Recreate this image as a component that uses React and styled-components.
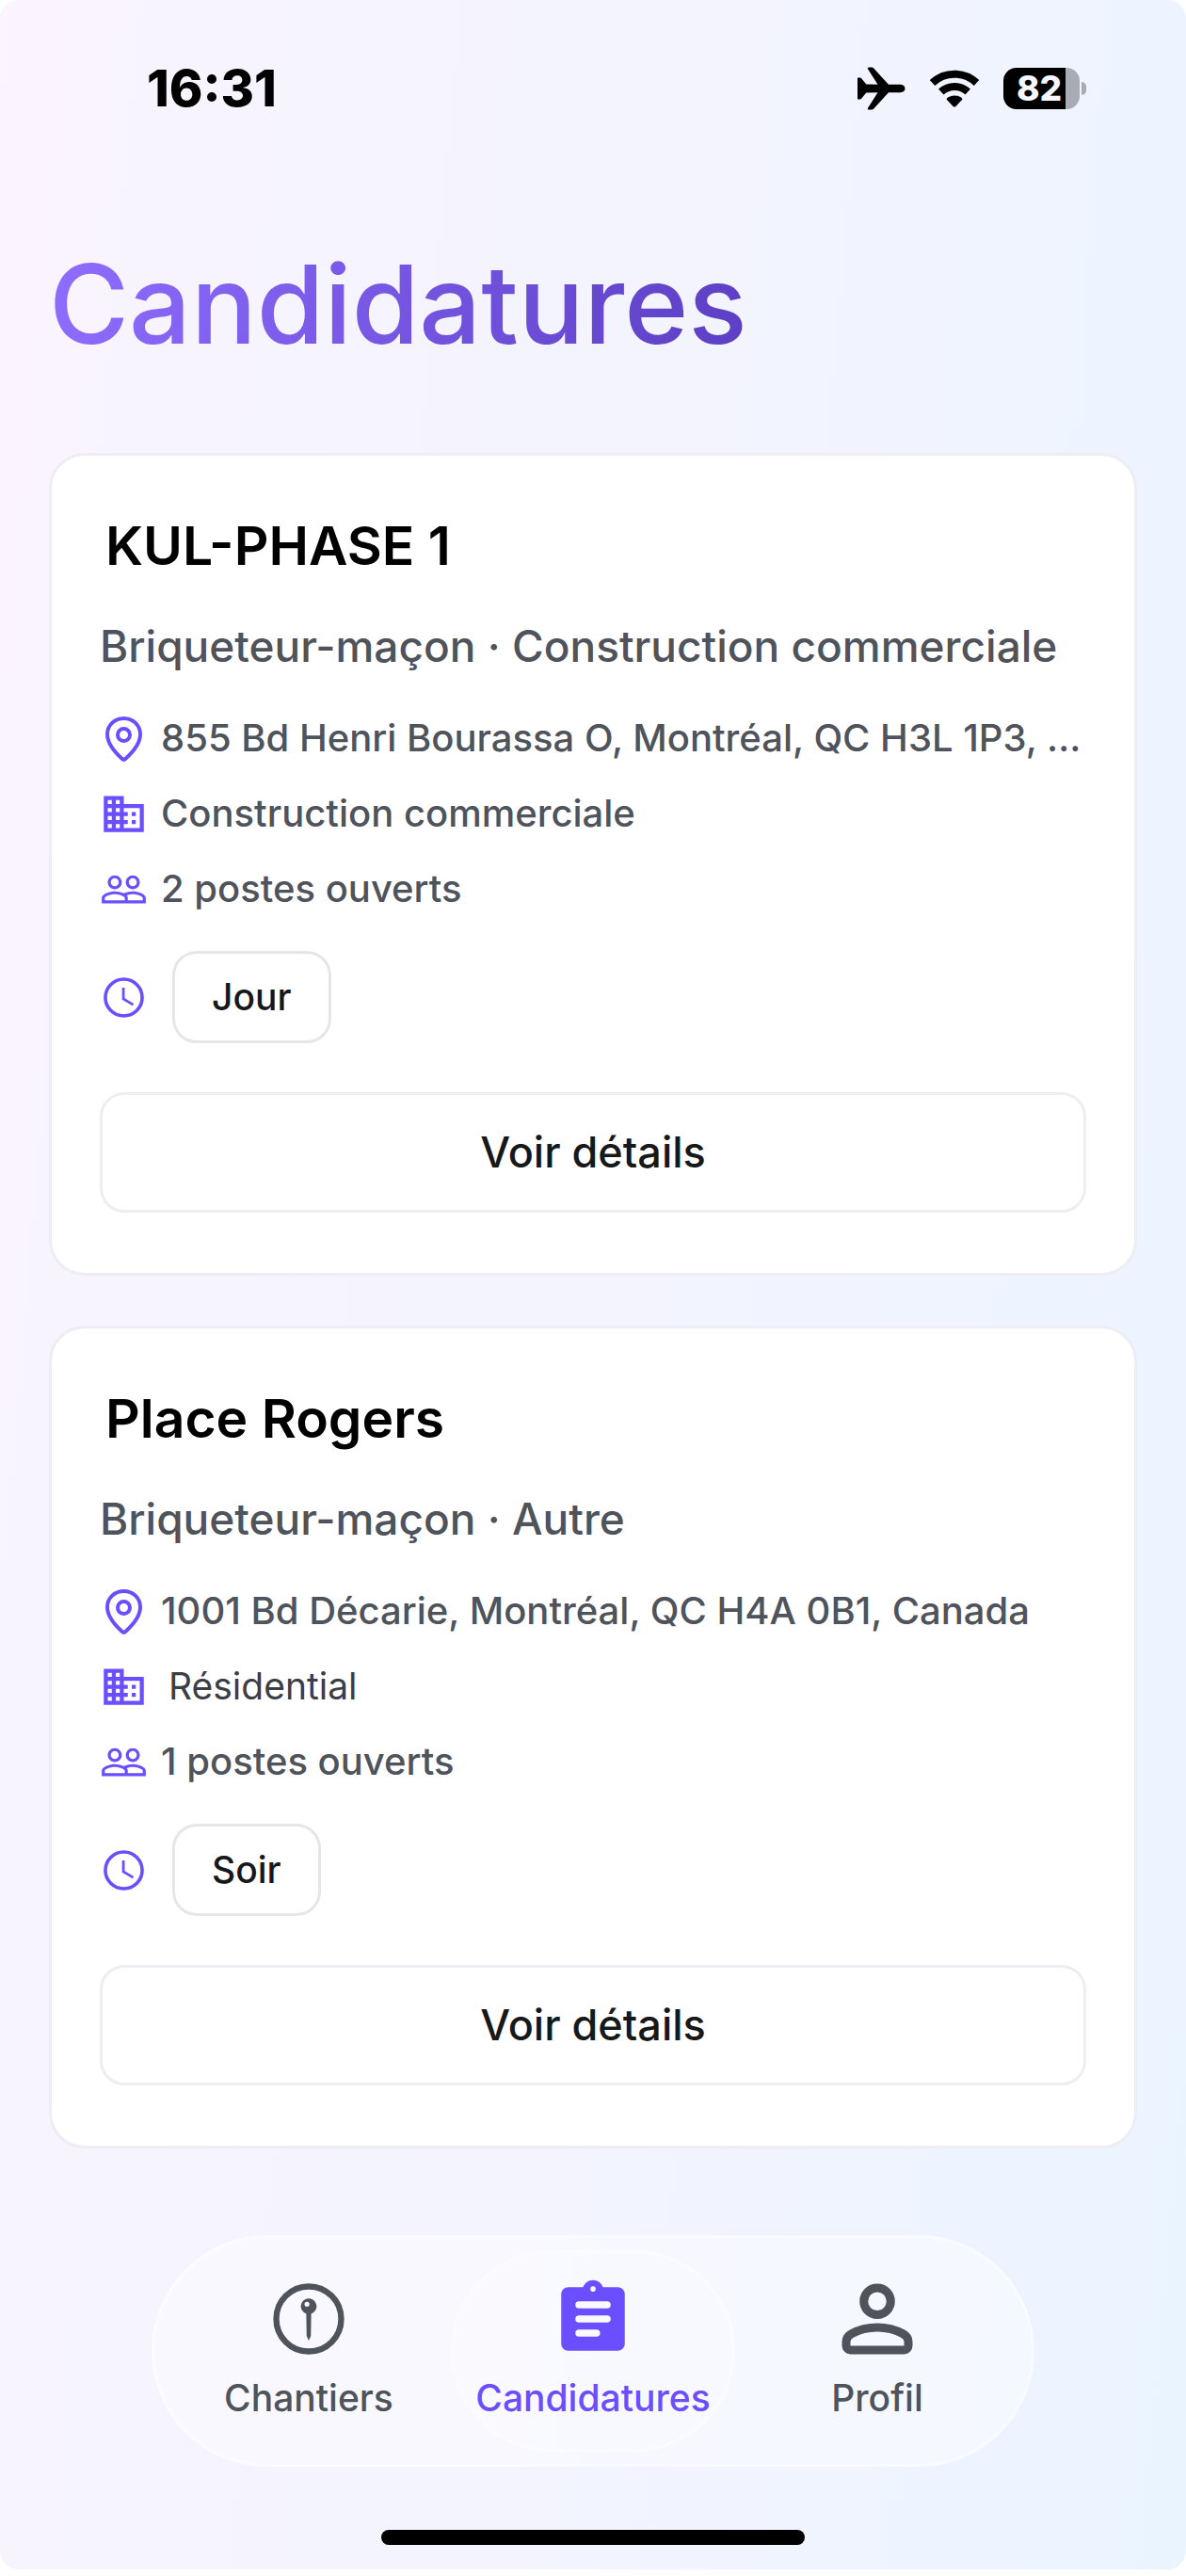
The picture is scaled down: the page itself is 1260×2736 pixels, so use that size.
import React from 'react';
import styled, { createGlobalStyle, css } from 'styled-components';

const Colors = {
  PRIMARY: '#6b4eff',
  TEXT: '#17181a',
  MUTED: '#4f535c',
  DARK: '#3b3e46',
  CARD_BORDER: '#ededf3',
  CHIP_BORDER: '#e6e6e9',
};

const GlobalStyle = createGlobalStyle`
  * {
    box-sizing: border-box;
  }
  body {
    margin: 0;
    background: #ffffff;
    font-family: Inter, Roboto, 'Liberation Sans', sans-serif;
    color: #000000;
  }
`;

const Screen = styled.div`
  min-height: calc(100vh - 7px);
  display: flex;
  flex-direction: column;
  border-radius: 20px;
  background: linear-gradient(95deg, #fcf4ff 0%, #f7f4fe 14%, #f4f4fe 45%, #f0f4ff 72%, #eaf4ff 100%);
`;

const StatusBar = styled.header`
  display: flex;
  align-items: center;
  justify-content: space-between;
  padding: 62px 106px 0 156px;
`;

const Clock = styled.time`
  font-size: 54px;
  font-weight: 800;
  line-height: 64px;
`;

const StatusIcons = styled.div`
  display: flex;
  align-items: center;
  gap: 25px;

  svg {
    display: block;
  }
`;

const Battery = styled.div`
  display: flex;
  align-items: center;
  gap: 2px;
`;

const BatteryBody = styled.div`
  width: 81px;
  height: 44px;
  border-radius: 14px;
  padding-left: 14px;
  background: linear-gradient(90deg, #000000 82%, #a9abb4 82%);
  color: #f5f6ff;
  font-size: 37px;
  font-weight: 800;
  line-height: 44px;
`;

const BatteryTip = styled.span`
  width: 5px;
  height: 14px;
  border-radius: 0 7px 7px 0;
  background: #a9abb4;
`;

const Main = styled.main`
  flex: 1;
  padding: 124px 52px 0;
`;

const PageTitle = styled.h1`
  width: fit-content;
  margin: 0 0 84px;
  font-size: 116px;
  font-weight: 500;
  line-height: 147px;
  color: transparent;
  background: linear-gradient(100deg, #8f6dff 0%, #5c3fc4 100%);
  background-clip: text;
`;

const CardList = styled.div`
  display: flex;
  flex-direction: column;
  gap: 53px;
`;

const Card = styled.article`
  border: 3px solid ${Colors.CARD_BORDER};
  border-radius: 38px;
  padding: 62px 51px 64px;
  background: #ffffff;
`;

const CardTitle = styled.h2`
  margin: 0 0 44px;
  padding-left: 6px;
  font-size: 57px;
  font-weight: 600;
  line-height: 68px;
`;

const Trade = styled.p`
  margin: 0 0 44px;
  color: ${Colors.MUTED};
  font-size: 46px;
  font-weight: 500;
  line-height: 56px;
`;

const Details = styled.ul`
  display: flex;
  flex-direction: column;
  gap: 28px;
  margin: 0 0 40px;
  padding: 0;
  list-style: none;
`;

const Detail = styled.li`
  display: flex;
  align-items: center;
  gap: 14px;
  height: 52px;
  color: ${Colors.MUTED};
  font-size: 40px;
  font-weight: 500;
  line-height: 52px;
`;

const DetailText = styled.span`
  min-width: 0;
  overflow: hidden;
  text-overflow: ellipsis;
  white-space: nowrap;
  ${(props) => (props.$plain && css`
    padding-left: 8px;
    color: ${Colors.DARK};
    font-size: 39px;
    font-weight: 400;
  `)}
`;

const DetailIcon = styled.svg`
  flex: none;
  width: 51px;
  height: 51px;
  color: ${Colors.PRIMARY};
`;

const Shift = styled.div`
  display: flex;
  align-items: center;
  gap: 26px;
  margin-bottom: 52px;
`;

const Chip = styled.span`
  border: 3px solid ${Colors.CHIP_BORDER};
  border-radius: 26px;
  padding: 20px 39px;
  color: ${Colors.TEXT};
  font-size: 39px;
  font-weight: 500;
  line-height: 52px;
`;

const DetailsButton = styled.button`
  display: block;
  width: 100%;
  border: 3px solid ${Colors.CARD_BORDER};
  border-radius: 26px;
  padding: 33px;
  background: #ffffff;
  color: ${Colors.TEXT};
  font-family: inherit;
  font-size: 45px;
  font-weight: 500;
  line-height: 56px;
`;

const TabBar = styled.nav`
  display: flex;
  align-self: center;
  width: 75%;
  max-width: 938px;
  margin-top: 90px;
  border: 3px solid rgba(255, 255, 255, 0.35);
  border-radius: 123px;
  padding: 13px;
  background: rgba(255, 255, 255, 0.4);
`;

const Tab = styled.a`
  flex: 1 1 0;
  display: flex;
  flex-direction: column;
  align-items: center;
  gap: 16px;
  border: 3px solid transparent;
  border-radius: 107px;
  padding: 25px 0 31px;
  color: ${Colors.MUTED};
  font-size: 39px;
  font-weight: 500;
  line-height: 46px;
  text-decoration: none;
  ${(props) => (props.$active && css`
    border-color: rgba(255, 255, 255, 0.35);
    background: rgba(255, 255, 255, 0.15);
    color: ${Colors.PRIMARY};
  `)}

  svg {
    width: 90px;
    height: 90px;
  }
`;

const HomeIndicator = styled.div`
  align-self: center;
  width: 36%;
  max-width: 450px;
  height: 16px;
  margin: 67px 0 26px;
  border-radius: 8px;
  background: #000000;
`;

const PlaneIcon = () => (
  <svg width="52" height="46" viewBox="0 0 52 46" aria-hidden="true">
    <path d="M2 11.5h1.4c.8 0 1.4.3 1.9.9l5 6.1 12.2.3L12 2.3C11.500 1.300 12 .5 13 .5h3c.9 0 1.600.3 2.200 1l15.800 17.300h12.500c3 0 5 1.900 5 4.200s-2 4.200-5 4.200H34L18.200 44.500c-.6.700-1.300 1-2.200 1h-3c-1 0-1.500-.8-1-1.800l10.500-16.500-12.200.3-5 6.100c-.5.600-1.100.9-1.900.9H2c-.7 0-1-.4-1-1V12.500c0-.6.300-1 1-1z" />
  </svg>
);

const WifiIcon = () => (
  <svg width="54" height="42" viewBox="0 0 54 42" aria-hidden="true">
    <g fill="none" stroke="#000000" strokeWidth="8">
      <path d="M3.500 15C16.500 2.500 37.500 2.500 50.500 15" />
      <path d="M12.800 24.500c8-7.500 20.400-7.500 28.400 0" />
    </g>
    <path d="M27 40.500c-.6 0-1-.2-1.400-.6l-6.400-6.600c-.7-.7-.6-1.600.1-2.200 4.400-3.600 11-3.600 15.400 0 .7.6.8 1.500.1 2.200l-6.400 6.600c-.4.400-.8.600-1.400.6z" />
  </svg>
);

const PlaceIcon = () => (
  <DetailIcon viewBox="0 0 51 51" fill="none" stroke="currentColor" strokeWidth="4" aria-hidden="true">
    <path d="M25.500 4C15.500 4 8 11.500 8 21c0 10 7.500 18.500 15.800 26a2.500 2.500 0 0 0 3.400 0C35.500 39.500 43 31 43 21c0-9.500-7.500-17-17.500-17z" />
    <circle cx="25.500" cy="21.500" r="6.500" />
  </DetailIcon>
);

const BusinessIcon = () => (
  <DetailIcon viewBox="0 0 24 24" fill="currentColor" aria-hidden="true">
    <path d="M12 7V3H2v18h20V7H12zM6 19H4v-2h2v2zm0-4H4v-2h2v2zm0-4H4V9h2v2zm0-4H4V5h2v2zm4 12H8v-2h2v2zm0-4H8v-2h2v2zm0-4H8V9h2v2zm0-4H8V5h2v2zm10 12h-8v-2h2v-2h-2v-2h2v-2h-2V9h8v10zm-2-8h-2v2h2v-2zm0 4h-2v2h2v-2z" />
  </DetailIcon>
);

const PeopleIcon = () => (
  <DetailIcon viewBox="0 0 24 24" fill="currentColor" aria-hidden="true">
    <path d="M16.5 13c-1.200 0-3.070.34-4.500 1-1.430-.67-3.300-1-4.500-1C5.330 13 1 14.080 1 16.250V19h22v-2.750c0-2.170-4.330-3.250-6.500-3.250zm-4 4.500h-10v-1.250c0-.54 2.560-1.750 5-1.750s5 1.210 5 1.750v1.250zm9 0H14v-1.250c0-.46-.2-.86-.52-1.220.88-.3 1.960-.53 3.020-.53 2.440 0 5 1.210 5 1.750v1.250zM7.500 12c1.930 0 3.500-1.570 3.500-3.500S9.430 5 7.500 5 4 6.570 4 8.500 5.570 12 7.500 12zm0-5.500c1.100 0 2 .9 2 2s-.9 2-2 2-2-.9-2-2 .9-2 2-2zm9 5.500c1.930 0 3.500-1.570 3.500-3.500S18.430 5 16.500 5 13 6.570 13 8.500s1.570 3.500 3.500 3.500zm0-5.500c1.100 0 2 .9 2 2s-.9 2-2 2-2-.9-2-2 .9-2 2-2z" />
  </DetailIcon>
);

const TimeIcon = () => (
  <DetailIcon viewBox="0 0 24 24" fill="none" stroke="currentColor" aria-hidden="true">
    <circle cx="12" cy="12" r="9.200" strokeWidth="1.700" />
    <path d="M11.800 7v5.700l4.900 2.900" strokeWidth="1.300" />
  </DetailIcon>
);

const SitesIcon = () => (
  <svg viewBox="0 0 24 24" aria-hidden="true">
    <circle cx="12" cy="12" r="9.200" fill="none" stroke="currentColor" strokeWidth="1.700" />
    <path
      fill="currentColor"
      fillRule="evenodd"
      d="M12 6.200a2.200 2.200 0 0 1 .7 4.300l-.1 6.300L12 18.100l-.6-1.300-.1-6.300A2.200 2.200 0 0 1 12 6.200zm-.5.900a.7.7 0 1 0 0 1.400.7.7 0 0 0 0-1.400z"
    />
  </svg>
);

const ClipboardIcon = () => (
  <svg viewBox="0 0 24 24" aria-hidden="true">
    <path
      fill="currentColor"
      fillRule="evenodd"
      d="M19 3h-4.180C14.400 1.840 13.300 1 12 1s-2.400.84-2.820 2H5c-1.100 0-2 .9-2 2v14c0 1.100.9 2 2 2h14c1.100 0 2-.9 2-2V5c0-1.100-.9-2-2-2zm-7-.25a.75.75 0 1 1 0 1.500.75.75 0 0 1 0-1.500zM8 7h8a1 1 0 0 1 0 2H8a1 1 0 0 1 0-2zm0 4h8a1 1 0 0 1 0 2H8a1 1 0 0 1 0-2zm0 4h5a1 1 0 0 1 0 2H8a1 1 0 0 1 0-2z"
    />
  </svg>
);

const ProfileIcon = () => (
  <svg viewBox="0 0 24 24" fill="none" stroke="currentColor" strokeWidth="2.400" aria-hidden="true">
    <circle cx="12" cy="7" r="3.800" />
    <path d="M3.200 18.400v1.200a1.200 1.200 0 0 0 1.200 1.200h15.200a1.200 1.200 0 0 0 1.200-1.200v-1.200c0-1-.6-1.700-1.500-2.200-2-1.100-4.500-1.800-7.300-1.800s-5.300.7-7.300 1.800c-.9.500-1.500 1.200-1.500 2.200z" />
  </svg>
);

const applications = [
  {
    title: 'KUL-PHASE 1',
    trade: 'Briqueteur-maçon · Construction commerciale',
    address: '855 Bd Henri Bourassa O, Montréal, QC H3L 1P3, …',
    sector: 'Construction commerciale',
    openings: 2,
    shift: 'Jour',
  },
  {
    title: 'Place Rogers',
    trade: 'Briqueteur-maçon · Autre',
    address: '1001 Bd Décarie, Montréal, QC H4A 0B1, Canada',
    sector: 'Résidential',
    plainSector: true,
    openings: 1,
    shift: 'Soir',
  },
];

const tabs = [
  { label: 'Chantiers', href: '#chantiers', Icon: SitesIcon },
  { label: 'Candidatures', href: '#candidatures', Icon: ClipboardIcon, active: true },
  { label: 'Profil', href: '#profil', Icon: ProfileIcon },
];

const ApplicationCard = ({ application }) => (
  <Card>
    <CardTitle>{application.title}</CardTitle>
    <Trade>{application.trade}</Trade>
    <Details>
      <Detail>
        <PlaceIcon />
        <DetailText>{application.address}</DetailText>
      </Detail>
      <Detail>
        <BusinessIcon />
        <DetailText $plain={application.plainSector}>{application.sector}</DetailText>
      </Detail>
      <Detail>
        <PeopleIcon />
        <DetailText>{`${application.openings} postes ouverts`}</DetailText>
      </Detail>
    </Details>
    <Shift>
      <TimeIcon />
      <Chip>{application.shift}</Chip>
    </Shift>
    <DetailsButton type="button">Voir détails</DetailsButton>
  </Card>
);

const App = () => (
  <>
    <GlobalStyle />
    <Screen>
      <StatusBar>
        <Clock>16:31</Clock>
        <StatusIcons>
          <PlaneIcon />
          <WifiIcon />
          <Battery>
            <BatteryBody>82</BatteryBody>
            <BatteryTip />
          </Battery>
        </StatusIcons>
      </StatusBar>
      <Main>
        <PageTitle>Candidatures</PageTitle>
        <CardList>
          {applications.map((application) => (
            <ApplicationCard key={application.title} application={application} />
          ))}
        </CardList>
      </Main>
      <TabBar>
        {tabs.map(({ label, href, Icon, active }) => (
          <Tab key={label} href={href} $active={active} aria-current={active ? 'page' : undefined}>
            <Icon />
            {label}
          </Tab>
        ))}
      </TabBar>
      <HomeIndicator />
    </Screen>
  </>
);

export default App;
